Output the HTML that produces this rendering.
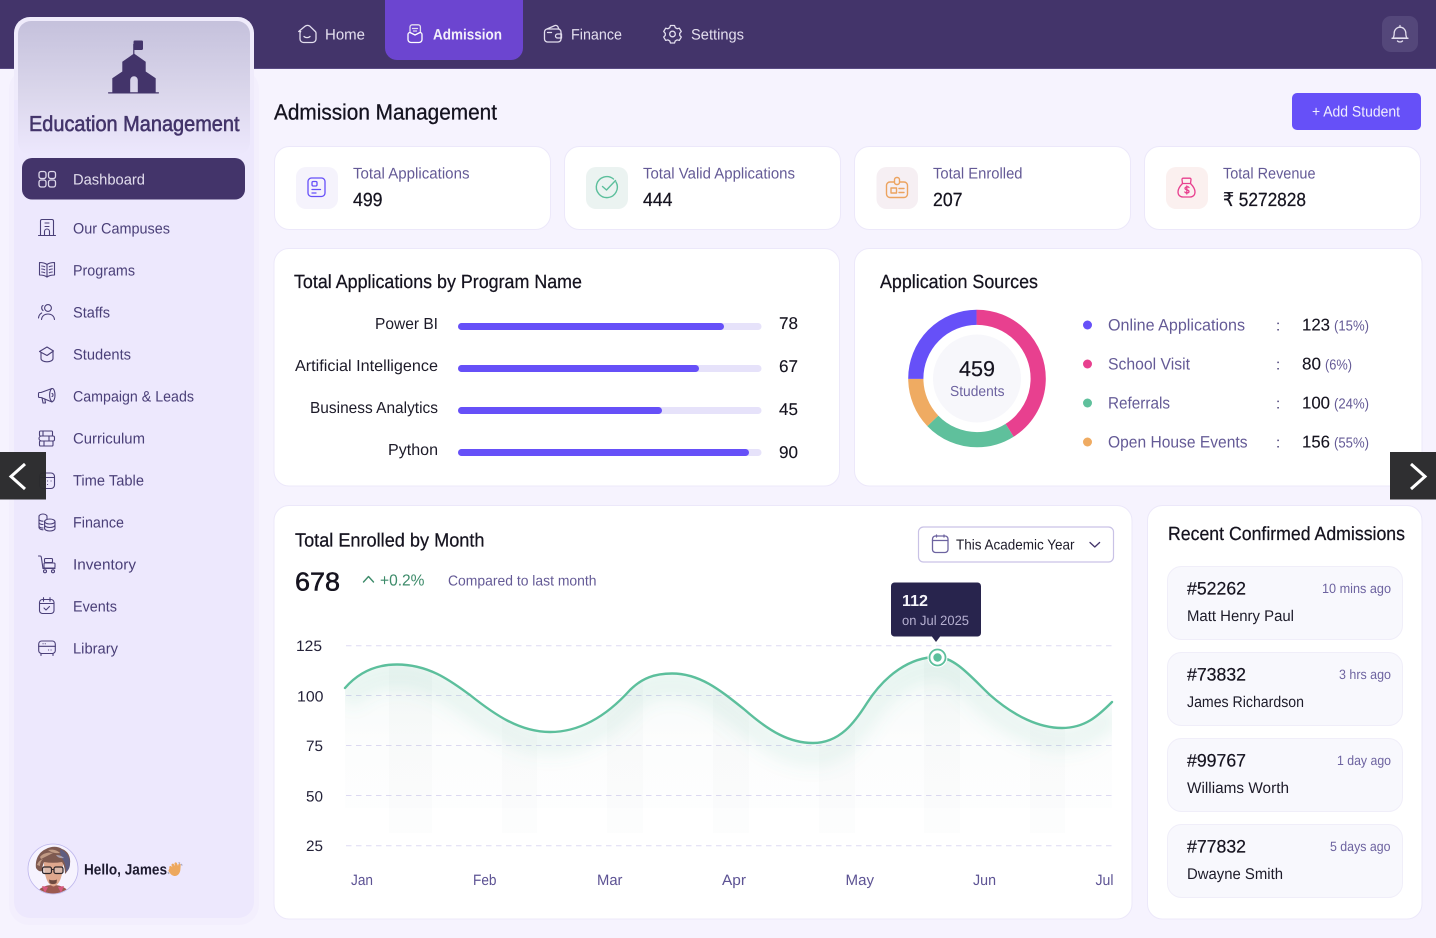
<!DOCTYPE html>
<html lang="en">
<head>
<meta charset="utf-8">
<title>Education Management - Admission Management</title>
<style>
html,body{margin:0;padding:0;background:#f6f3fe;width:1436px;height:938px;overflow:hidden}
svg{display:block}
text{font-family:"Liberation Sans","DejaVu Sans",sans-serif;text-rendering:geometricPrecision;white-space:pre}
.nav{font-size:15px;fill:#e3deee}
.side{font-size:15px;fill:#4a3f78}
.lab{font-size:15.5px;fill:#645a96}
.val{font-size:19px;fill:#15131f;stroke:#15131f;stroke-width:.25}
.h{font-size:19px;fill:#15131f;stroke:#15131f;stroke-width:.25}
.dk{font-size:16px;fill:#1d1b29}
.num{font-size:17px;fill:#15131f;stroke:#15131f;stroke-width:.12}
.pct{font-size:14.5px;fill:#645a96}
.ax{font-size:15px;fill:#25233a}
.mo{font-size:15px;fill:#5d5394}
.tm{font-size:13.5px;fill:#6d63a0}
.ic{fill:none;stroke:#4a3f78;stroke-width:1.1;stroke-linecap:round;stroke-linejoin:round}
.nic{fill:none;stroke:#e3deee;stroke-width:1.3;stroke-linecap:round;stroke-linejoin:round}
</style>
</head>
<body>
<svg xmlns="http://www.w3.org/2000/svg" width="1436" height="938" viewBox="0 0 1436 938">
<defs>
<linearGradient id="sg" x1="0" y1="0" x2="0" y2="1"><stop offset="0" stop-color="#c5c1dc"/><stop offset=".5" stop-color="#d9d5ea"/><stop offset="1" stop-color="#ede8fd"/></linearGradient>
<linearGradient id="ag" gradientUnits="userSpaceOnUse" x1="0" y1="660" x2="0" y2="810"><stop offset="0" stop-color="#5cbf9c" stop-opacity=".07"/><stop offset=".55" stop-color="#7fa8a0" stop-opacity=".022"/><stop offset="1" stop-color="#99aabb" stop-opacity=".018"/></linearGradient>
<linearGradient id="bg" gradientUnits="userSpaceOnUse" x1="0" y1="660" x2="0" y2="833"><stop offset="0" stop-color="#6a8f88" stop-opacity=".035"/><stop offset="1" stop-color="#7a8f98" stop-opacity=".018"/></linearGradient>
<filter id="bl" x="-10%" y="-50%" width="120%" height="200%"><feGaussianBlur stdDeviation="8"/></filter>
<path id="c" d="M345 688C358 673 375 664.500 397 664.500C430 664.500 452 682 470 695C495 715 520 732 550 732C585 732 612 710 630 690C642 678 655 673.500 672 673.500C700 673.500 720 690 745 710C770 732 790 743 813 743C840 743 855 722 867 703C885 675 910 657 937 657C955 657 972 678 990 695C1015 717 1040 728 1062 728C1085 728 1098 716 1112 702"/>
<clipPath id="ac"><path d="M345 688C358 673 375 664.500 397 664.500C430 664.500 452 682 470 695C495 715 520 732 550 732C585 732 612 710 630 690C642 678 655 673.500 672 673.500C700 673.500 720 690 745 710C770 732 790 743 813 743C840 743 855 722 867 703C885 675 910 657 937 657C955 657 972 678 990 695C1015 717 1040 728 1062 728C1085 728 1098 716 1112 702V840H345Z"/></clipPath>
<clipPath id="av"><circle cx="53" cy="869" r="24.500"/></clipPath>
</defs>

<!-- page + header -->
<rect width="1436" height="938" fill="#f6f3fe"/>
<rect width="1436" height="69" fill="#43346a"/>
<rect y="68" width="1436" height="1" fill="#5a4c84"/>

<!-- top nav -->
<path d="M385 0H523V48a12 12 0 0 1-12 12H397a12 12 0 0 1-12-12Z" fill="#6c45d0"/>
<g class="nic">
<path d="M298.700 31.500 305 26.300a4 4 0 0 1 5 0l5.300 5.200a2 2 0 0 1 .7 1.500v6a3.500 3.500 0 0 1-3.500 3.500h-9a3.500 3.500 0 0 1-3.500-3.500v-6a2 2 0 0 1 .7-1.500Z"/>
<path d="M304 36.500c1.500 1.500 4.500 1.500 6 0"/>
<path d="M410 32v-5a2.200 2.200 0 0 1 2.200-2.200h6a2.200 2.200 0 0 1 2.200 2.200v5M412.500 28.500h5M413.500 31h3"/>
<path d="M408 34.500a2 2 0 0 1 2-2l5 2.500 5-2.500a2 2 0 0 1 2 2v5a3 3 0 0 1-3 3h-8a3 3 0 0 1-3-3Z" stroke="#fff"/>
<path d="M547 29l8-3.500c1-.4 2.500.2 3 1.500l.8 2"/>
<rect x="544.500" y="29" width="16.500" height="13" rx="3"/>
<path d="M547.500 32.500h4"/>
<path d="M561.500 34h-4a2 2 0 0 0 0 4h4Z"/>
<path d="M670.500 25.500h4l.8 2.200 1.700 1 2.300-.5 2 3.300-1.600 1.800v2l1.600 1.800-2 3.300-2.300-.5-1.700 1-.8 2.100h-4l-.8-2.100-1.700-1-2.300.5-2-3.300 1.600-1.800v-2l-1.600-1.800 2-3.300 2.300.5 1.700-1Z"/>
<circle cx="672.500" cy="34" r="2.800"/>
</g>
<text class="nav" x="325" y="39.500" textLength="40" lengthAdjust="spacingAndGlyphs">Home</text>
<text class="nav" x="433" y="39.500" textLength="69" lengthAdjust="spacingAndGlyphs" style="font-weight:700;fill:#f3f0fa">Admission</text>
<text class="nav" x="571" y="39.500" textLength="51" lengthAdjust="spacingAndGlyphs">Finance</text>
<text class="nav" x="691" y="39.500" textLength="53" lengthAdjust="spacingAndGlyphs">Settings</text>
<rect x="1382" y="16" width="36" height="36" rx="9" fill="#54477a"/>
<g class="nic" stroke-width="1.100"><path d="M1393 38c.9-1.200 1.200-2.500 1.200-5a5.800 5.800 0 0 1 11.600 0c0 2.500.3 3.800 1.200 5Z"/><path d="M1392 38.300h16M1397.500 41c1.200 1.300 3.800 1.300 5 0M1400 25.500v1.500"/></g>

<!-- sidebar -->
<rect x="9" y="69" width="250" height="856" rx="20" fill="#f3effd"/>
<rect x="14" y="69" width="240" height="849" rx="16" fill="#ede8fd"/>
<rect x="14" y="17" width="240" height="160" rx="16" fill="#efebfb"/>
<rect x="14" y="100" width="240" height="100" fill="#ede8fd"/>
<rect x="18" y="21" width="232" height="134" rx="13" fill="url(#sg)"/>
<!-- logo -->
<g fill="#43346a">
<rect x="133.500" y="40.500" width="9.500" height="9.500" rx="1.200"/>
<rect x="133.200" y="44" width="1.200" height="11"/>
<path d="M134 53.500 145.700 61.800V71.500L155.700 78.300V92.500H137.800V80a3.800 3.800 0 0 0-7.600 0V92.500H112.300V78.300L122.300 71.500V61.800Z"/>
<rect x="108" y="92.200" width="51" height="1.300" rx=".6"/>
</g>
<text x="29" y="131" textLength="210.500" lengthAdjust="spacingAndGlyphs" style="font-size:21.500px;fill:#43346a;stroke:#43346a;stroke-width:.55">Education Management</text>
<!-- active -->
<rect x="22" y="158" width="223" height="41.500" rx="10" fill="#43346a"/>
<g fill="none" stroke="#ddd8ea" stroke-width="1.300">
<rect x="39" y="171.500" width="7" height="7" rx="2.200"/><rect x="48.500" y="171.500" width="7" height="7" rx="2.200"/>
<rect x="39" y="180" width="7" height="7" rx="2.200"/><rect x="48.500" y="180" width="7" height="7" rx="2.200"/>
</g>
<text x="73" y="184.500" textLength="72" lengthAdjust="spacingAndGlyphs" style="font-size:15px;fill:#e3deee">Dashboard</text>

<g class="side">
<text class="side" x="73" y="233.500" textLength="97" lengthAdjust="spacingAndGlyphs">Our Campuses</text>
<text class="side" x="73" y="275.500" textLength="62" lengthAdjust="spacingAndGlyphs">Programs</text>
<text class="side" x="73" y="317.500" textLength="37" lengthAdjust="spacingAndGlyphs">Staffs</text>
<text class="side" x="73" y="359.500" textLength="58" lengthAdjust="spacingAndGlyphs">Students</text>
<text class="side" x="73" y="401.500" textLength="121" lengthAdjust="spacingAndGlyphs">Campaign &amp; Leads</text>
<text class="side" x="73" y="443.500" textLength="72" lengthAdjust="spacingAndGlyphs">Curriculum</text>
<text class="side" x="73" y="485.500" textLength="71" lengthAdjust="spacingAndGlyphs">Time Table</text>
<text class="side" x="73" y="527.500" textLength="51" lengthAdjust="spacingAndGlyphs">Finance</text>
<text class="side" x="73" y="569.500" textLength="63" lengthAdjust="spacingAndGlyphs">Inventory</text>
<text class="side" x="73" y="611.500" textLength="44" lengthAdjust="spacingAndGlyphs">Events</text>
<text class="side" x="73" y="653.500" textLength="45" lengthAdjust="spacingAndGlyphs">Library</text>
</g>
<g class="ic">
<!-- campuses --><g transform="translate(38 219)"><path d="M.5 16.500h17M2.500 16.500V2a1.500 1.500 0 0 1 1.500-1.500h10A1.500 1.500 0 0 1 15.500 2v14.500"/><path d="M7 4h4M7 7.500h4M6.500 16.500v-4a2.500 2.500 0 0 1 5 0v4"/></g>
<!-- programs --><g transform="translate(38 261.500)"><path d="M9 3C7 1.500 4 1 1.500 1v12.500c2.500 0 5.500.5 7.500 2 2-1.500 5-2 7.500-2V1C14 1 11 1.500 9 3ZM9 3v12.500"/><path d="M3.700 4.500c1 0 2 .2 3 .7M3.700 7.500c1 0 2 .2 3 .7M3.700 10.500c1 0 2 .2 3 .7M14.300 4.500c-1 0-2 .2-3 .7M14.300 7.500c-1 0-2 .2-3 .7M14.300 10.500c-1 0-2 .2-3 .7"/></g>
<!-- staffs --><g transform="translate(38 304)"><circle cx="10" cy="4" r="3.400"/><path d="M3.500 15.500c.5-3.500 3-5.500 6.500-5.500s6 2 6.500 5.500M.5 14c.2-2.500 1.300-4 3.200-5M5 1.500c-1.500.5-2 3.500 0 5"/></g>
<!-- students --><g transform="translate(38 346)"><path d="M9 1 15.500 5 9 9.500 1.500 5.500Z"/><path d="M3 7v5.500c0 2 2.700 3.300 6 3.300s6-1.300 6-3.300V6"/></g>
<!-- campaign --><g transform="translate(38 387.500)"><ellipse cx="14.300" cy="7.500" rx="2.700" ry="6.500"/><path d="M14 1 3 5H1.500a1 1 0 0 0-1 1v3a1 1 0 0 0 1 1H3l11 4.500M4 10.200l1 5.300h2.500l-.7-4.200"/><path d="M14 6c.6 0 1 .7 1 1.500S14.600 9 14 9"/></g>
<!-- curriculum --><g transform="translate(38 430)"><path d="M2.500 1H13.500a1 1 0 0 1 1 1v3a1 1 0 0 1-1 1H2.500a1 1 0 0 1-1-1V2a1 1 0 0 1 1-1ZM5 1v5"/><path d="M3.500 6H15a1.500 1.500 0 0 1 1.500 1.500v2A1.500 1.500 0 0 1 15 11H3.500a2.500 2.500 0 0 1 0-5ZM11 6v5"/><path d="M2.500 11H14a1 1 0 0 1 1 1v3a1 1 0 0 1-1 1H2.500a1 1 0 0 1-1-1v-3a1 1 0 0 1 1-1ZM6 11v5"/></g>
<!-- timetable --><g transform="translate(38 472)"><rect x="1.500" y="1" width="15" height="15.500" rx="3.500"/><path d="M1.500 5.500h15M6 9h.1M9.500 9h.1M13 9h.1M6 12.500h.1M9.500 12.500h.1"/></g>
<!-- finance --><g transform="translate(38 513.500)"><path d="M9 5.500V3c0-1.500-2-2.500-4-2.500S1 1.500 1 3v11c0 1.300 2 2.300 4 2.300M1 5.700c0 1.200 2 2 4 2M1 9c0 1.200 2 2 4 2M1 12.500c0 1.200 2 2 4 2"/><ellipse cx="11.800" cy="8" rx="5.200" ry="2.500"/><path d="M6.600 8v7c0 1.400 2.300 2.500 5.200 2.500S17 16.400 17 15V8M6.600 11.500c0 1.400 2.300 2.500 5.200 2.500S17 12.900 17 11.500"/></g>
<!-- inventory --><g transform="translate(38 555)"><path d="M.5 1h1.500c.7 0 1.200.5 1.300 1.200L5 13.500h12"/><rect x="6.500" y="3.500" width="8" height="4" rx="1"/><rect x="6" y="8" width="11" height="5" rx="1"/><circle cx="7" cy="16.300" r="1.500"/><circle cx="15" cy="16.300" r="1.500"/></g>
<!-- events --><g transform="translate(38 597)"><rect x="1.500" y="2.500" width="14.500" height="14" rx="3"/><path d="M5.500.7v3.500M12 .7v3.500M1.500 6.500h14.500M6 11l2 2 3.500-3.500"/></g>
<!-- library --><g transform="translate(38 640)"><rect x=".7" y="1" width="16.600" height="12.500" rx="3"/><path d="M.7 6.300h16.600M3 13.500v2M15 13.500v2M5 3.800h.1M7.200 3.800h.1M10.500 10h.1M13 10h.1"/></g>
</g>

<!-- avatar -->
<circle cx="53" cy="869" r="25" fill="#f6f3fe" stroke="#bdb6ec" stroke-width=".8"/>
<g clip-path="url(#av)">
<path d="M36 895c2-7 9-10 17-10s15 3 17 10Z" fill="#9c5a50"/>
<path d="M42 886l3 7 3-6ZM64 886l-3 7-3-6Z" fill="#d8587e"/>
<path d="M44 862c0 13 3 23 9.500 24.500 6.500-1.500 9.500-11.500 9.500-24.500Z" fill="#dfa88e"/>
<path d="M36 868c-1-9 3-16 10-19 5-3 12-3 16 0 6 2 9 8 8 15-1 4-2 7-5 10 0-5-1-9-3-12-6 1-12 1-18 0-1 3-2 5-2 9-2 1-4 0-6-3Z" fill="#7f5a50"/>
<path d="M60 849c5 2 10 7 10 14 0 4-1 7-4 9 0-5-1-9-3-12-2-3-3-7-3-11Z" fill="#5f5d80"/>
<path d="M40 857c3-4 9-5 13-4-4 2-8 4-12 6ZM48 850c5-1 9 0 12 3-4 .5-8 0-12-3ZM37 865c1-3 3-5 6-6-2 2-3 4-3 7Z" fill="#c09a84"/>
<path d="M56 855c3 0 6 1 8 3-3 .5-6 0-8-3Z" fill="#a8a0b0"/>
<rect x="42.500" y="867" width="9" height="6.500" rx="1.800" fill="#d9c4bc" fill-opacity=".6" stroke="#2c2428" stroke-width="1.200"/>
<rect x="54" y="867" width="9" height="6.500" rx="1.800" fill="#d9c4bc" fill-opacity=".6" stroke="#2c2428" stroke-width="1.200"/>
<path d="M51.500 869.500h2.500" stroke="#2c2428" stroke-width="1"/>
<path d="M49 879.500c2.500 1 5 1 8 0l-.5 3.500c-2 1.500-5 1.500-7 0Z" fill="#6f4a40"/>
</g>
<text x="84" y="874.500" textLength="83" lengthAdjust="spacingAndGlyphs" style="font-size:15px;font-weight:700;fill:#1d1a2e">Hello, James</text>
<path d="M169.500 868c-1-1.400.8-2.800 2-1.600l1 1-.9-2c-.6-1.500 1.400-2.500 2.300-1.100l1.200 2-.6-2.500c-.3-1.500 1.800-2 2.400-.6l1.100 2.700.4-1.500c.4-1.400 2.300-1 2.300.5l-.3 4.500c-.2 4.500-3.500 7.500-7 6.300-2.500-.8-3.600-2.800-5-5Z" fill="#eda85e"/>
<path d="M178.500 862.500l1.500.7M181 864l1.300 1.500M168 872l1 2" stroke="#a9aac6" stroke-width="1.200" fill="none"/>

<!-- main heading -->
<text x="274" y="119.500" textLength="223" lengthAdjust="spacingAndGlyphs" style="font-size:22px;fill:#14121f;stroke:#14121f;stroke-width:.3">Admission Management</text>
<rect x="1292" y="93" width="129" height="37" rx="5" fill="#6650f8"/>
<text x="1312" y="116.500" textLength="88" lengthAdjust="spacingAndGlyphs" style="font-size:15px;fill:#f0eefe">+ Add Student</text>

<!-- stat cards -->
<g fill="#fff" stroke="#ece8fa" stroke-width="1">
<rect x="274.500" y="146.500" width="276" height="83" rx="15"/>
<rect x="564.500" y="146.500" width="276" height="83" rx="15"/>
<rect x="854.500" y="146.500" width="276" height="83" rx="15"/>
<rect x="1144.500" y="146.500" width="276" height="83" rx="15"/>
</g>
<rect x="296" y="167" width="42" height="42" rx="10" fill="#f5f3fc"/>
<rect x="586" y="167" width="42" height="42" rx="10" fill="#ebf3f1"/>
<rect x="876.500" y="167" width="41.500" height="42" rx="10" fill="#f6eff3"/>
<rect x="1166" y="167" width="42" height="42" rx="10" fill="#fbf0ef"/>
<g fill="none" stroke="#6650f8" stroke-width="1.300" stroke-linecap="round" stroke-linejoin="round">
<rect x="308" y="178" width="17" height="18.500" rx="3.500"/><rect x="312" y="181.500" width="5" height="4.500" rx="1.200"/><path d="M312 189.500h8.500M312 193h4"/>
</g>
<g fill="none" stroke="#5cbf9c" stroke-width="1.400" stroke-linecap="round" stroke-linejoin="round">
<path d="M616 182a10.500 10.500 0 1 1-2.500-3"/><path d="M602.500 186.500l4 3.500 9-9.500"/>
</g>
<g fill="none" stroke="#eca35f" stroke-width="1.400" stroke-linecap="round" stroke-linejoin="round">
<rect x="886.500" y="182" width="21" height="15.500" rx="3.500"/><rect x="894.500" y="177.500" width="5" height="7" rx="2.200" fill="#f6eff3"/><rect x="891" y="188" width="5.500" height="5"/><path d="M899 188.500h5M899 192.500h5"/>
</g>
<g fill="none" stroke="#e8408f" stroke-width="1.300" stroke-linecap="round" stroke-linejoin="round">
<path d="M1182.500 183.500c-3 3-4.500 6-4.500 8.500 0 3 2 5 5 5h7c3 0 5-2 5-5 0-2.500-1.500-5.500-4.500-8.500Z"/><path d="M1182.500 183.500l-.5-4a1.200 1.200 0 0 1 1.200-1.300h6.600a1.200 1.200 0 0 1 1.200 1.300l-.5 4"/>
<path d="M1189 187.500c-.5-1-3.800-1-4 .8-.1 2 4 1.200 4 3.200 0 1.800-3.500 1.800-4.200.5M1186.800 186v8"/>
</g>
<text class="lab" x="353" y="178.500" textLength="116.500" lengthAdjust="spacingAndGlyphs">Total Applications</text>
<text class="lab" x="643" y="178.500" textLength="152" lengthAdjust="spacingAndGlyphs">Total Valid Applications</text>
<text class="lab" x="933" y="178.500" textLength="89.500" lengthAdjust="spacingAndGlyphs">Total Enrolled</text>
<text class="lab" x="1223" y="178.500" textLength="92.500" lengthAdjust="spacingAndGlyphs">Total Revenue</text>
<text class="val" x="353" y="206" textLength="29.500" lengthAdjust="spacingAndGlyphs">499</text>
<text class="val" x="643" y="206" textLength="29.500" lengthAdjust="spacingAndGlyphs">444</text>
<text class="val" x="933" y="206" textLength="29.500" lengthAdjust="spacingAndGlyphs">207</text>
<text class="val" x="1223" y="206" textLength="83" lengthAdjust="spacingAndGlyphs">₹ 5272828</text>

<!-- program panel -->
<rect x="274" y="248.500" width="565.500" height="237.500" rx="15" fill="#fff" stroke="#ece8fa"/>
<text class="h" x="294" y="288" textLength="288" lengthAdjust="spacingAndGlyphs">Total Applications by Program Name</text>
<g fill="#e6e2fa">
<rect x="458" y="323" width="303.500" height="7" rx="3.500"/><rect x="458" y="365" width="303.500" height="7" rx="3.500"/><rect x="458" y="407" width="303.500" height="7" rx="3.500"/><rect x="458" y="449" width="303.500" height="7" rx="3.500"/>
</g>
<g fill="#6650f8">
<rect x="458" y="323" width="266" height="7" rx="3.500"/><rect x="458" y="365" width="241" height="7" rx="3.500"/><rect x="458" y="407" width="204" height="7" rx="3.500"/><rect x="458" y="449" width="291" height="7" rx="3.500"/>
</g>
<text class="dk" x="375" y="329" textLength="63" lengthAdjust="spacingAndGlyphs">Power BI</text>
<text class="dk" x="295" y="371" textLength="143" lengthAdjust="spacingAndGlyphs">Artificial Intelligence</text>
<text class="dk" x="310" y="413" textLength="128" lengthAdjust="spacingAndGlyphs">Business Analytics</text>
<text class="dk" x="388" y="455" textLength="50" lengthAdjust="spacingAndGlyphs">Python</text>
<text class="num" x="779" y="329" textLength="19" lengthAdjust="spacingAndGlyphs">78</text>
<text class="num" x="779" y="372" textLength="19" lengthAdjust="spacingAndGlyphs">67</text>
<text class="num" x="779" y="415" textLength="19" lengthAdjust="spacingAndGlyphs">45</text>
<text class="num" x="779" y="458" textLength="19" lengthAdjust="spacingAndGlyphs">90</text>

<!-- sources panel -->
<rect x="854.500" y="248.500" width="567.500" height="237.500" rx="15" fill="#fff" stroke="#ece8fa"/>
<text class="h" x="880" y="288" textLength="158" lengthAdjust="spacingAndGlyphs">Application Sources</text>
<circle cx="977" cy="378.500" r="44" fill="#f7f7fb"/>
<g fill="none" stroke-width="15.200" transform="rotate(-90 977 378.500)">
<circle cx="977" cy="378.500" r="61.200" pathLength="360" stroke="#e8408f" stroke-dasharray="148 212"/>
<circle cx="977" cy="378.500" r="61.200" pathLength="360" stroke="#5fc09c" stroke-dasharray="78.500 281.500" stroke-dashoffset="-148"/>
<circle cx="977" cy="378.500" r="61.200" pathLength="360" stroke="#efab62" stroke-dasharray="43.500 316.500" stroke-dashoffset="-226.500"/>
<circle cx="977" cy="378.500" r="61.200" pathLength="360" stroke="#6650f8" stroke-dasharray="90 270" stroke-dashoffset="-270"/>
</g>
<text x="959" y="376" textLength="36" lengthAdjust="spacingAndGlyphs" style="font-size:21.500px;fill:#15131f;stroke:#15131f;stroke-width:.2">459</text>
<text x="950" y="396" textLength="54.500" lengthAdjust="spacingAndGlyphs" style="font-size:14.500px;fill:#6d63a0">Students</text>
<circle cx="1087.500" cy="325" r="4.500" fill="#6650f8"/><circle cx="1087.500" cy="364" r="4.500" fill="#e8408f"/><circle cx="1087.500" cy="403" r="4.500" fill="#5fc09c"/><circle cx="1087.500" cy="442" r="4.500" fill="#efab62"/>
<g>
<text class="lab" x="1108" y="330.500" textLength="137" lengthAdjust="spacingAndGlyphs" style="font-size:16.500px">Online Applications</text>
<text class="lab" x="1108" y="369.500" textLength="82" lengthAdjust="spacingAndGlyphs" style="font-size:16.500px">School Visit</text>
<text class="lab" x="1108" y="408.500" textLength="62" lengthAdjust="spacingAndGlyphs" style="font-size:16.500px">Referrals</text>
<text class="lab" x="1108" y="447.500" textLength="139.500" lengthAdjust="spacingAndGlyphs" style="font-size:16.500px">Open House Events</text>
<text class="lab" x="1276" y="330.500" style="font-size:15px;fill:#3f3670">:</text><text class="lab" x="1276" y="369.500" style="font-size:15px;fill:#3f3670">:</text><text class="lab" x="1276" y="408.500" style="font-size:15px;fill:#3f3670">:</text><text class="lab" x="1276" y="447.500" style="font-size:15px;fill:#3f3670">:</text>
<text class="num" x="1302" y="330.500" textLength="28" lengthAdjust="spacingAndGlyphs">123</text>
<text class="pct" x="1334" y="330.500" textLength="35" lengthAdjust="spacingAndGlyphs">(15%)</text>
<text class="num" x="1302" y="369.500" textLength="19" lengthAdjust="spacingAndGlyphs">80</text>
<text class="pct" x="1325" y="369.500" textLength="27" lengthAdjust="spacingAndGlyphs">(6%)</text>
<text class="num" x="1302" y="408.500" textLength="28" lengthAdjust="spacingAndGlyphs">100</text>
<text class="pct" x="1334" y="408.500" textLength="35" lengthAdjust="spacingAndGlyphs">(24%)</text>
<text class="num" x="1302" y="447.500" textLength="28" lengthAdjust="spacingAndGlyphs">156</text>
<text class="pct" x="1334" y="447.500" textLength="35" lengthAdjust="spacingAndGlyphs">(55%)</text>
</g>

<!-- chart panel -->
<rect x="274" y="505.500" width="858" height="413.500" rx="15" fill="#fff" stroke="#ece8fa"/>
<text class="h" x="295" y="546.500" textLength="189.500" lengthAdjust="spacingAndGlyphs">Total Enrolled by Month</text>
<text x="295" y="590.500" textLength="45" lengthAdjust="spacingAndGlyphs" style="font-size:26px;fill:#15131f;stroke:#15131f;stroke-width:.55">678</text>
<path d="M363.500 582 368.500 576.500 373.500 582" fill="none" stroke="#3d8b6a" stroke-width="1.400" stroke-linecap="round" stroke-linejoin="round"/>
<text x="380" y="585.500" textLength="44.500" lengthAdjust="spacingAndGlyphs" style="font-size:16px;fill:#3d8b6a">+0.2%</text>
<text x="448" y="585.500" textLength="148.500" lengthAdjust="spacingAndGlyphs" style="font-size:14.500px;fill:#645a96">Compared to last month</text>
<rect x="918.500" y="527" width="195" height="35" rx="5" fill="#fff" stroke="#c9c2e6" stroke-width="1.200"/>
<g fill="none" stroke="#6d63a0" stroke-width="1.300" stroke-linecap="round"><rect x="932.500" y="536" width="15.500" height="16.500" rx="3"/><path d="M932.500 540.500h15.500M936.500 535v2M944 535v2"/></g>
<text x="956" y="549.500" textLength="118.500" lengthAdjust="spacingAndGlyphs" style="font-size:14.500px;fill:#1d1b29">This Academic Year</text>
<path d="M1090 542.500l4.800 4.500 4.800-4.500" fill="none" stroke="#43346a" stroke-width="1.300" stroke-linecap="round" stroke-linejoin="round"/>

<g stroke="#dedaf3" stroke-width="1" stroke-dasharray="5.500 4.500">
<path d="M346 645.700H1112M346 695.500H1112M346 745.500H1112M346 795.500H1112M346 845.700H1112"/>
</g>
<g clip-path="url(#ac)">
<rect x="345" y="655" width="767" height="153" fill="url(#ag)"/>
<g fill="url(#bg)">
<rect x="389" y="655" width="43" height="178"/><rect x="502" y="655" width="35" height="178"/><rect x="607" y="655" width="36" height="178"/><rect x="713" y="655" width="36" height="178"/><rect x="819" y="655" width="36" height="178"/><rect x="924" y="655" width="36" height="178"/><rect x="1030" y="655" width="35" height="178"/>
</g>
<use href="#c" fill="none" stroke="#5cbf9c" stroke-width="24" stroke-opacity=".1" transform="translate(0 12)" filter="url(#bl)"/>
</g>
<use href="#c" fill="none" stroke="#5cbf9c" stroke-width="2.400" stroke-linecap="round"/>
<circle cx="937.500" cy="657.500" r="10" fill="#fff"/>
<circle cx="937.500" cy="657.500" r="8" fill="#fff" stroke="#5cbf9c" stroke-width="1.800"/>
<circle cx="937.500" cy="657.500" r="4.200" fill="#5cbf9c"/>
<rect x="891" y="582.500" width="90" height="54" rx="3.500" fill="#28244d"/>
<path d="M931.500 636h9l-4.500 6Z" fill="#28244d"/>
<text x="902" y="606" textLength="26" lengthAdjust="spacingAndGlyphs" style="font-size:16px;font-weight:700;fill:#f5f4fa">112</text>
<text x="902" y="625" textLength="67" lengthAdjust="spacingAndGlyphs" style="font-size:13.500px;fill:#b5afd0">on Jul 2025</text>

<text class="ax" x="296" y="651" textLength="26" lengthAdjust="spacingAndGlyphs">125</text>
<text class="ax" x="297" y="701.500" textLength="26.500" lengthAdjust="spacingAndGlyphs">100</text>
<text class="ax" x="306" y="751" textLength="17" lengthAdjust="spacingAndGlyphs">75</text>
<text class="ax" x="306" y="801.500" textLength="17" lengthAdjust="spacingAndGlyphs">50</text>
<text class="ax" x="306" y="851" textLength="17" lengthAdjust="spacingAndGlyphs">25</text>
<text class="mo" x="351" y="885" textLength="22" lengthAdjust="spacingAndGlyphs">Jan</text>
<text class="mo" x="473" y="885" textLength="23.500" lengthAdjust="spacingAndGlyphs">Feb</text>
<text class="mo" x="597" y="885" textLength="25.500" lengthAdjust="spacingAndGlyphs">Mar</text>
<text class="mo" x="722" y="885" textLength="24" lengthAdjust="spacingAndGlyphs">Apr</text>
<text class="mo" x="845.500" y="885" textLength="28.500" lengthAdjust="spacingAndGlyphs">May</text>
<text class="mo" x="973" y="885" textLength="23" lengthAdjust="spacingAndGlyphs">Jun</text>
<text class="mo" x="1095.500" y="885" textLength="18" lengthAdjust="spacingAndGlyphs">Jul</text>

<!-- recent panel -->
<rect x="1147.500" y="505.500" width="274.500" height="413.500" rx="15" fill="#fff" stroke="#ece8fa"/>
<text class="h" x="1168" y="540" textLength="237" lengthAdjust="spacingAndGlyphs">Recent Confirmed Admissions</text>
<g fill="#f8f8fd" stroke="#f0eef9">
<rect x="1167.500" y="566.500" width="235" height="73" rx="14"/><rect x="1167.500" y="652.500" width="235" height="73" rx="14"/><rect x="1167.500" y="738.500" width="235" height="73" rx="14"/><rect x="1167.500" y="824.500" width="235" height="73" rx="14"/>
</g>
<g>
<text x="1187" y="594.500" textLength="59" lengthAdjust="spacingAndGlyphs" style="font-size:18px;fill:#15131f;stroke:#15131f;stroke-width:.2">#52262</text>
<text x="1187" y="680.500" textLength="59" lengthAdjust="spacingAndGlyphs" style="font-size:18px;fill:#15131f;stroke:#15131f;stroke-width:.2">#73832</text>
<text x="1187" y="766.500" textLength="59" lengthAdjust="spacingAndGlyphs" style="font-size:18px;fill:#15131f;stroke:#15131f;stroke-width:.2">#99767</text>
<text x="1187" y="852.500" textLength="59" lengthAdjust="spacingAndGlyphs" style="font-size:18px;fill:#15131f;stroke:#15131f;stroke-width:.2">#77832</text>
<text class="dk" x="1187" y="621" textLength="107" lengthAdjust="spacingAndGlyphs" style="font-size:15.500px">Matt Henry Paul</text>
<text class="dk" x="1187" y="707" textLength="117" lengthAdjust="spacingAndGlyphs" style="font-size:15.500px">James Richardson</text>
<text class="dk" x="1187" y="793" textLength="102" lengthAdjust="spacingAndGlyphs" style="font-size:15.500px">Williams Worth</text>
<text class="dk" x="1187" y="879" textLength="96" lengthAdjust="spacingAndGlyphs" style="font-size:15.500px">Dwayne Smith</text>
<text class="tm" x="1322" y="593" textLength="69" lengthAdjust="spacingAndGlyphs">10 mins ago</text>
<text class="tm" x="1339" y="679" textLength="52" lengthAdjust="spacingAndGlyphs">3 hrs ago</text>
<text class="tm" x="1337" y="765" textLength="54" lengthAdjust="spacingAndGlyphs">1 day ago</text>
<text class="tm" x="1330" y="851" textLength="60.500" lengthAdjust="spacingAndGlyphs">5 days ago</text>
</g>

<!-- carousel arrows -->
<rect x="0" y="452" width="46" height="47.500" fill="#2b2b2d" fill-opacity=".98"/>
<path d="M25 464 11 476.500 25 489" fill="none" stroke="#fff" stroke-width="3"/>
<rect x="1390" y="452" width="46" height="47.500" fill="#2b2b2d" fill-opacity=".98"/>
<path d="M1411 464 1425 476.500 1411 489" fill="none" stroke="#fff" stroke-width="3"/>
</svg>
</body>
</html>
